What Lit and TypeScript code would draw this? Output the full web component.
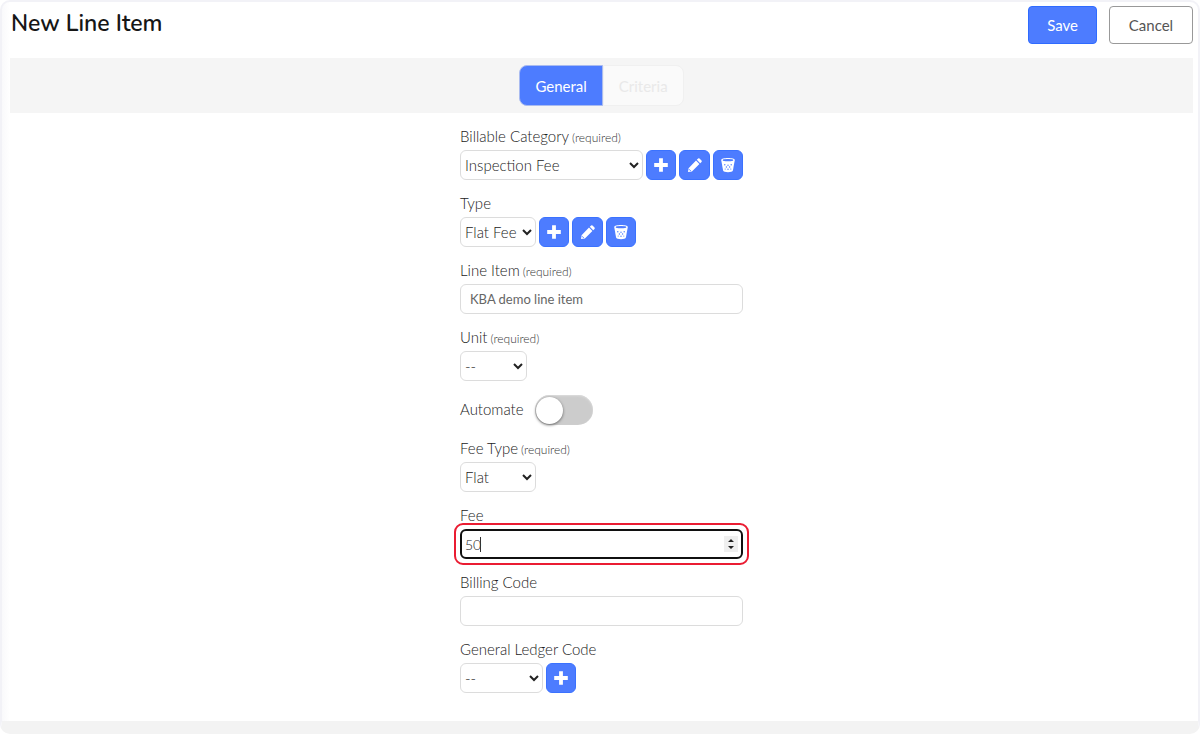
import { LitElement, html, css, svg, nothing } from "lit";
import { customElement, property, state } from "lit/decorators.js";
import { classMap } from "lit/directives/class-map.js";

const icons = {
  add: svg`<path d="M6.1 1.2h3.8v4.9h4.9v3.8H9.9v4.9H6.1V9.9H1.2V6.1h4.9z" fill="currentColor" />`,
  edit: svg`<path d="M11.1 1.5a1 1 0 0 1 1.4 0l2 2a1 1 0 0 1 0 1.400l-1.300 1.300-3.400-3.400zM9 3.600l3.400 3.400-7.500 7.500-3.900.6.6-3.900z" fill="currentColor" /><path d="M2 12.200l1.800 1.800" stroke="#4d7cff" stroke-width=".9" />`,
  remove: svg`<path d="M1.200 2.900C1.200 1.600 4.200.9 8 .9s6.800.7 6.800 2l-1.900 10.600c-.2 1.100-2.300 1.700-4.900 1.700s-4.700-.6-4.900-1.700z" fill="currentColor" />
    <ellipse cx="8" cy="3.200" rx="5.300" ry="1.100" fill="#4d7cff" />
    <g fill="#4d7cff"><circle cx="4.800" cy="7.700" r=".7" /><circle cx="8" cy="8.300" r=".7" /><circle cx="11.200" cy="7.700" r=".7" /><circle cx="6.400" cy="10" r=".7" /><circle cx="9.600" cy="10" r=".7" /><circle cx="5.200" cy="12" r=".6" /><circle cx="8" cy="12.300" r=".7" /><circle cx="10.800" cy="12" r=".6" /></g>`,
};

type Action = keyof typeof icons;

@customElement("icon-button")
class IconButton extends LitElement {
  @property() action: Action = "add";
  @property() label = "";

  static styles = css`
    :host {
      display: block;
      flex: none;
    }
    .button {
      display: grid;
      place-items: center;
      width: 30px;
      height: 30px;
      padding: 0;
      border: 1px solid #3b72ff;
      border-radius: 6px;
      background: #4d7cff;
      color: #fff;
      cursor: pointer;
    }
    .edit {
      width: 31px;
    }
    .icon {
      width: 16px;
      height: 16px;
    }
  `;

  render() {
    return html`<button
      type="button"
      class="button ${this.action}"
      aria-label=${this.label}
    >
      <svg class="icon" viewBox="0 0 16 16" aria-hidden="true">${icons[this.action]}</svg>
    </button>`;
  }
}

interface Field {
  id: string;
  label: string;
  kind: "select" | "text" | "number" | "toggle";
  value?: string;
  required?: boolean;
  size?: string;
  actions?: Action[];
}

const fields: Field[] = [
  { id: "category", label: "Billable Category", kind: "select", value: "Inspection Fee", required: true, size: "fill", actions: ["add", "edit", "remove"] },
  { id: "type", label: "Type", kind: "select", value: "Flat Fee", size: "medium", actions: ["add", "edit", "remove"] },
  { id: "line-item", label: "Line Item", kind: "text", value: "KBA demo line item", required: true },
  { id: "unit", label: "Unit", kind: "select", value: "--", required: true, size: "small" },
  { id: "automate", label: "Automate", kind: "toggle" },
  { id: "fee-type", label: "Fee Type", kind: "select", value: "Flat", required: true, size: "medium" },
  { id: "fee", label: "Fee", kind: "number", value: "50" },
  { id: "billing-code", label: "Billing Code", kind: "text", value: "" },
  { id: "ledger-code", label: "General Ledger Code", kind: "select", value: "--", size: "large", actions: ["add"] },
];

@customElement("app-root")
class AppRoot extends LitElement {
  @state() private tab = "General";

  static styles = css`
    :host {
      display: block;
      font-family: Lato, "Liberation Sans", sans-serif;
      font-size: 15px;
      color: #222;
    }
    * {
      box-sizing: border-box;
    }
    .page {
      display: flex;
      flex-direction: column;
      min-height: 100vh;
      border: 2px solid #f2f2f7;
      border-bottom: 13px solid #f3f3f3;
      border-radius: 10px;
      padding: 4px 5px 0 8px;
      background: linear-gradient(90deg, #f9f9fb, #fff 8px);
    }
    .header {
      display: flex;
      align-items: flex-start;
      justify-content: space-between;
    }
    .title {
      margin: 0 0 0 1px;
      font-family: Nunito, Lato, sans-serif;
      font-size: 23px;
      font-weight: 600;
      line-height: 36px;
      color: #161616;
    }
    .commands {
      display: flex;
      gap: 12px;
    }
    .command {
      height: 38px;
      padding: 0 18px;
      border: 1px solid #999;
      border-radius: 4px;
      background: #fff;
      color: #555;
      font: inherit;
      cursor: pointer;
    }
    .secondary {
      min-width: 84px;
    }
    .primary {
      border-color: #2f6bff;
      background: #4d7cff;
      color: #fff;
    }
    .tabs {
      display: flex;
      justify-content: center;
      margin-top: 14px;
      padding: 7px 0;
      background: #f5f5f5;
    }
    .tab {
      height: 41px;
      padding: 0 15px;
      border: 1px solid #f0f0f0;
      border-radius: 0 8px 8px 0;
      background: #fafafa;
      color: #e9e9e9;
      font: inherit;
    }
    .tab:first-child {
      border-radius: 8px 0 0 8px;
    }
    .active {
      border-color: #a9bbf0;
      background: #4d7cff;
      color: #fff;
    }
    .form {
      display: flex;
      flex-direction: column;
      gap: 12px;
      width: 100%;
      max-width: 283px;
      margin: 12px auto 0;
      padding-bottom: 28px;
    }
    .label {
      display: block;
      height: 22px;
      line-height: 22px;
      font-weight: 300;
    }
    .required {
      margin-left: 3px;
      font-size: 12px;
      color: #333;
    }
    .row {
      position: relative;
      display: flex;
      gap: 3px;
      margin-top: 3px;
    }
    .control {
      height: 30px;
      border: 1px solid #dcdcdc;
      border-radius: 6px;
      background: #fff;
      color: #222;
      font: inherit;
      font-weight: 300;
    }
    select.control {
      padding: 0;
    }
    .fill {
      flex: 1;
      min-width: 0;
    }
    .small {
      width: 67px;
    }
    .medium {
      width: 76px;
    }
    .large {
      width: 83px;
    }
    input.text {
      width: 100%;
      padding: 0 9px;
      font-size: 13px;
      font-weight: 400;
      color: #666;
    }
    input.number {
      width: 100%;
      padding: 0 3px;
      border: 2px solid #101010;
      font-size: 14px;
      outline: none;
    }
    .number::-webkit-inner-spin-button {
      appearance: none;
      width: 14px;
      height: 16px;
      opacity: 1;
      background: #efefef
        url("data:image/svg+xml,%3Csvg xmlns='http://www.w3.org/2000/svg' viewBox='0 0 14 16'%3E%3Cpath d='M4 6l3-3 3 3zM4 10l3 3 3-3z' fill='%23222'/%3E%3C/svg%3E")
        center / 14px 16px no-repeat;
    }
    .caret {
      position: absolute;
      top: 8px;
      left: 20px;
      width: 1px;
      height: 15px;
      background: #333;
    }
    .highlight {
      position: absolute;
      inset: -6px;
      border: 2px solid #ea1c32;
      border-radius: 9px;
      pointer-events: none;
    }
    .switch-row {
      display: flex;
      align-items: center;
      gap: 11px;
      height: 32px;
    }
    .switch {
      display: flex;
      align-items: center;
      appearance: none;
      width: 58px;
      height: 30px;
      margin: 2px 0 0;
      padding: 1px;
      border-radius: 16px;
      background: #ccc;
      box-shadow: inset 0 1px 2px #ddd;
      cursor: pointer;
    }
    .switch::before {
      content: "";
      width: 27px;
      height: 27px;
      border-radius: 50%;
      background: #fff;
      box-shadow: 0 1px 3px #666;
    }
    .switch:checked {
      justify-content: flex-end;
      background: #4d7cff;
    }
  `;

  private control(field: Field) {
    if (field.kind === "select") {
      return html`<select id=${field.id} class="control ${field.size}">
        <option>${field.value}</option>
      </select>`;
    }
    if (field.kind === "number") {
      return html`<input id=${field.id} class="control number" type="number" .value=${field.value ?? ""} />
        <span class="caret"></span>
        <span class="highlight"></span>`;
    }
    return html`<input id=${field.id} class="control text" type="text" .value=${field.value ?? ""} />`;
  }

  private field(field: Field) {
    if (field.kind === "toggle") {
      return html`<div class="switch-row">
        <label class="label" for=${field.id}>${field.label}</label>
        <input id=${field.id} class="switch" type="checkbox" role="switch" />
      </div>`;
    }
    return html`<div>
      <label class="label" for=${field.id}
        >${field.label}${field.required
          ? html`<span class="required">(required)</span>`
          : nothing}</label
      >
      <div class="row">
        ${this.control(field)}
        ${field.actions?.map(
          (action) => html`<icon-button .action=${action} .label=${`${action} ${field.label}`}></icon-button>`
        )}
      </div>
    </div>`;
  }

  render() {
    return html`<main class="page">
      <header class="header">
        <h1 class="title">New Line Item</h1>
        <div class="commands">
          <button type="button" class="command primary">Save</button>
          <button type="button" class="command secondary">Cancel</button>
        </div>
      </header>
      <nav class="tabs">
        ${["General", "Criteria"].map(
          (name) => html`<button
            type="button"
            class=${classMap({ tab: true, active: this.tab === name })}
            @click=${() => (this.tab = name)}
          >
            ${name}
          </button>`
        )}
      </nav>
      <form class="form">${fields.map((field) => this.field(field))}</form>
    </main>`;
  }
}
